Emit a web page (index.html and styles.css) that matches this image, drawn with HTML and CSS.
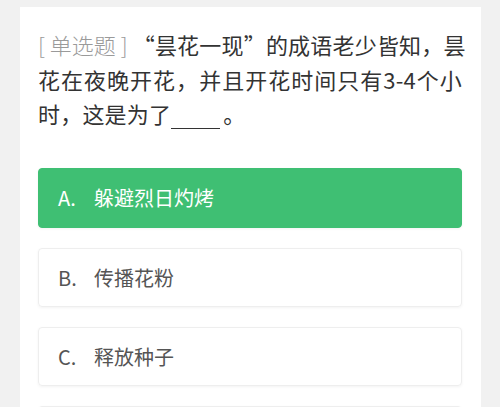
FILE: index.html
```html
<!DOCTYPE html>
<html lang="zh-CN">
<head>
<meta charset="utf-8">
<link rel="stylesheet" href="styles.css">
</head>
<body>
<div class="page">
  <div class="card">
    <p class="question"><span class="line full"><span class="tag">[ 单选题 ]</span> “昙花一现”的成语老少皆知，昙</span><span class="line full">花在夜晚开花，并且开花时间只有3-4个小</span><span class="line">时，这是为了<span class="blank"></span>。</span></p>
    <div class="options">
      <div class="option selected"><span class="label">A.</span><span class="text">躲避烈日灼烤</span></div>
      <div class="option"><span class="label">B.</span><span class="text">传播花粉</span></div>
      <div class="option"><span class="label">C.</span><span class="text">释放种子</span></div>
      <div class="option ghost"></div>
    </div>
  </div>
</div>
</body>
</html>
```
FILE: styles.css
```css
html, body {
  margin: 0;
  padding: 0;
  background: #f1f1f1;
  font-family: "Noto Sans CJK SC", "Noto Sans", sans-serif;
}
.page {
  height: 407px;
  overflow: hidden;
  padding: 7px 19px 0 20px;
}
.card {
  background: #ffffff;
  padding: 20px 19px 40px 18px;
  min-height: 500px;
}
.question {
  margin: 0;
  font-size: 22px;
  line-height: 34.5px;
  letter-spacing: 0.2px;
  color: #333333;
  white-space: nowrap;
}
.line {
  display: block;
}
.line.full {
  text-align: justify;
  text-align-last: justify;
}
.tag {
  color: #9a9a9a;
  font-weight: 300;
  letter-spacing: 0;
}
.blank {
  display: inline-block;
  width: 49px;
  height: 24px;
  border-bottom: 1.5px solid #333;
  margin: 0 3px 0 0;
  vertical-align: -6px;
}
.options {
  margin-top: 37px;
  display: flex;
  flex-direction: column;
  gap: 20px;
}
.option {
  height: 59px;
  box-sizing: border-box;
  display: flex;
  align-items: center;
  padding-left: 19px;
  border: 1px solid #eeeeee;
  border-radius: 4px;
  box-shadow: 0 1px 3px rgba(0,0,0,0.05);
  font-size: 20px;
  color: #555555;
}
.option.selected {
  height: 60px;
  background: #3fbf73;
  border-color: #3fbf73;
  color: #ffffff;
}
.label {
  width: 36px;
  flex: none;
}
```
